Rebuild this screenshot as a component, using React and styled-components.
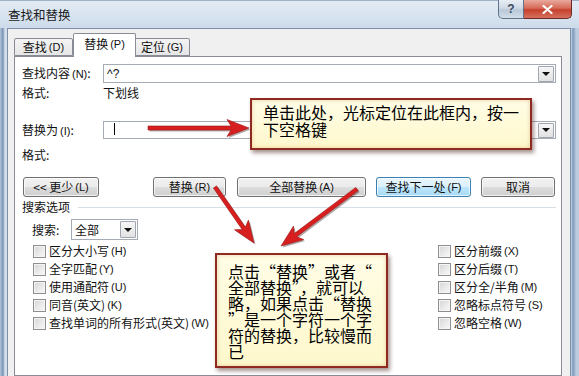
import styled, { createGlobalStyle } from 'styled-components';

const GlobalStyle = createGlobalStyle`
  html, body { margin: 0; padding: 0; }
  body {
    width: 579px;
    height: 376px;
    overflow: hidden;
    background: #fff;
    font-family: "Noto Sans CJK SC", "Noto Sans", sans-serif;
    font-size: 12px;
    color: #111;
  }
`;

const Window = styled.div`
  position: relative;
  width: 579px;
  height: 376px;
  overflow: hidden;
  display: flex;
  flex-direction: column;
  background: linear-gradient(
    90deg,
    #b3c5db 0px,
    #7893b5 3px,
    #dbe4ee 5px,
    #c9d7e7 7px,
    #c9d7e7 571px,
    #7a97ba 573px,
    #bccbdd 576px
  );
`;

const TitleBar = styled.div`
  height: 28px;
  flex-shrink: 0;
  display: flex;
  align-items: flex-start;
  padding-left: 8px;
  background: linear-gradient(180deg, #e3ebf4 0%, #d6e2ef 60%, #cddbea 100%);
  border-top: 1px solid #9fb2c8;
  box-sizing: border-box;
`;

const Title = styled.div`
  margin-top: 5px;
  font-size: 12.5px;
  line-height: 18px;
  color: #1a1a1a;
`;

const Controls = styled.div`
  margin-left: auto;
  margin-right: 7px;
  margin-top: -1px;
  display: flex;
`;

const CtrlButton = styled.div`
  width: ${(p) => p.$w}px;
  height: 19px;
  box-sizing: border-box;
  border: 1px solid ${(p) => (p.$close ? '#6b2a25' : '#5f738b')};
  border-top: none;
  border-radius: ${(p) => (p.$close ? '0 0 5px 0' : '0 0 0 5px')};
  ${(p) => (p.$close ? 'border-left: none;' : '')}
  background: ${(p) =>
    p.$close
      ? 'linear-gradient(180deg, #e9a99c 0%, #d66a58 45%, #c5402c 55%, #d7705f 100%)'
      : 'linear-gradient(180deg, #e8eef5 0%, #cfdae6 45%, #b9c8d8 55%, #d2dde8 100%)'};
  display: flex;
  align-items: center;
  justify-content: center;
  color: ${(p) => (p.$close ? '#fff' : '#3a4b5e')};
  font-family: "Liberation Sans", sans-serif;
  font-weight: bold;
  font-size: 12px;
`;

const Body = styled.div`
  flex: 1;
  display: flex;
  padding: 0 8px 0 7px;
  min-height: 0;
`;

const Client = styled.div`
  flex: 1;
  display: flex;
  flex-direction: column;
  background: #f0f0f0;
  border: 1px solid #7f91a8;
  border-bottom: none;
  padding: 4px 8px 0 6px;
`;

const Tabs = styled.div`
  display: flex;
  align-items: flex-end;
  height: 23px;
`;

const Tab = styled.div`
  width: ${(p) => p.$w}px;
  height: ${(p) => (p.$active ? 24 : 18)}px;
  box-sizing: border-box;
  border: 1px solid #898c95;
  border-bottom: ${(p) => (p.$active ? 'none' : '1px solid #898c95')};
  ${(p) => (p.$active ? '' : 'border-left: none;')}
  ${(p) => (p.$first ? 'border-left: 1px solid #898c95;' : '')}
  ${(p) => (p.$active ? 'border-right: 1px solid #898c95; margin-right: -1px;' : '')}
  border-radius: 2px 2px 0 0;
  margin-bottom: ${(p) => (p.$active ? -1 : 0)}px;
  position: relative;
  z-index: ${(p) => (p.$active ? 2 : 1)};
  background: ${(p) =>
    p.$active ? '#ffffff' : 'linear-gradient(180deg, #f4f4f4 0%, #e6e6e6 100%)'};
  display: flex;
  align-items: center;
  justify-content: center;
  padding-bottom: ${(p) => (p.$active ? 4 : 0)}px;
  font-size: 12px;
  line-height: 14px;
`;

const Key = styled.span`
  font-family: "Liberation Sans", sans-serif;
  font-size: 11px;
  margin-left: 2px;
`;

const Panel = styled.div`
  flex: 1;
  background: #fff;
  border: 1px solid #898c95;
  padding: 7px 5px 0 7px;
  display: flex;
  flex-direction: column;
`;

const FieldRow = styled.div`
  display: flex;
  align-items: center;
  height: ${(p) => p.$h}px;
  margin-top: ${(p) => p.$mt || 0}px;
  line-height: 14px;
`;

const Label = styled.div`
  width: 81px;
  flex-shrink: 0;
  white-space: nowrap;
`;

const Combo = styled.div`
  flex: 1;
  height: 100%;
  box-sizing: border-box;
  border: 1px solid #a5acb5;
  background: #fff;
  display: flex;
  align-items: center;
  padding-left: 3px;
  font-family: "Liberation Sans", sans-serif;
  font-size: 12px;
`;

const ComboText = styled.span`
  flex: 1;
`;

const Caret = styled.span`
  display: inline-block;
  width: 1px;
  height: 12px;
  background: #000;
  margin-left: 7px;
`;

const DropBtn = styled.div`
  width: ${(p) => p.$w || 16}px;
  height: ${(p) => p.$h || 16}px;
  box-sizing: border-box;
  margin-right: 1px;
  border: 1px solid #a0a7b0;
  border-radius: 1px;
  background: linear-gradient(180deg, #f6f6f6 0%, #e2e2e2 100%);
  display: flex;
  align-items: center;
  justify-content: center;
  &::after {
    content: '';
    border-left: 4px solid transparent;
    border-right: 4px solid transparent;
    border-top: 4px solid #111;
  }
`;

const ButtonRow = styled.div`
  display: flex;
  margin-top: 15px;
  padding-left: 1px;
`;

const Button = styled.div`
  width: ${(p) => p.$w}px;
  height: 20px;
  margin-left: ${(p) => p.$ml || 0}px;
  box-sizing: border-box;
  border: 1px solid ${(p) => (p.$primary ? '#3c7fb1' : '#707070')};
  border-radius: 3px;
  background: ${(p) =>
    p.$primary
      ? 'linear-gradient(180deg, #eaf6fd 0%, #d9f0fc 50%, #bee6fd 51%, #a7d9f5 100%)'
      : 'linear-gradient(180deg, #f2f2f2 0%, #ebebeb 50%, #dddddd 51%, #cfcfcf 100%)'};
  box-shadow: inset 0 0 0 1px rgba(255, 255, 255, 0.7);
  display: flex;
  align-items: center;
  justify-content: center;
  font-size: 12px;
  line-height: 14px;
  white-space: nowrap;
`;

const OptionsHeader = styled.div`
  display: flex;
  align-items: center;
  height: 14px;
  margin-top: 3px;
  line-height: 14px;
`;

const HeaderLine = styled.div`
  flex: 1;
  height: 1px;
  margin-left: 8px;
  background: #d5dfe5;
`;

const SearchRow = styled.div`
  display: flex;
  align-items: center;
  height: 21px;
  margin-top: 5px;
  padding-left: 10px;
  line-height: 14px;
`;

const SearchLabel = styled.div`
  width: 39px;
`;

const Select = styled.div`
  width: 67px;
  height: 21px;
  box-sizing: border-box;
  border: 1px solid #a5acb5;
  background: #fff;
  display: flex;
  align-items: center;
  padding-left: 3px;
`;

const CheckGrid = styled.div`
  display: grid;
  grid-template-columns: 405px auto;
  grid-template-rows: repeat(5, 18px);
  grid-auto-flow: column;
  margin-top: 2px;
  padding-left: 11px;
`;

const CheckItem = styled.div`
  display: flex;
  align-items: center;
  line-height: 14px;
  white-space: nowrap;
`;

const Box = styled.span`
  width: 13px;
  height: 13px;
  box-sizing: border-box;
  border: 1px solid #8f8f8f;
  background: linear-gradient(135deg, #d4d4d4 0%, #ececec 60%, #f8f8f8 100%);
  box-shadow: inset 0 0 0 1px #f4f4f4;
  margin-right: 3px;
  flex-shrink: 0;
`;

const Callout = styled.div`
  position: absolute;
  left: ${(p) => p.$x}px;
  top: ${(p) => p.$y}px;
  width: ${(p) => p.$w}px;
  height: ${(p) => p.$h}px;
  box-sizing: border-box;
  border: 2px solid #8e2a22;
  background: linear-gradient(180deg, #fffde6 0%, #fef8cc 100%);
  box-shadow: 2px 3px 4px rgba(60, 20, 10, 0.45), inset 0 0 4px rgba(190, 120, 60, 0.35);
  padding: ${(p) => p.$pad};
  font-size: 16px;
  line-height: ${(p) => p.$lh}px;
  color: #000;
  z-index: 5;
`;

const Line = styled.span`
  display: block;
  white-space: nowrap;
`;

const Overlay = styled.svg`
  position: absolute;
  left: 0;
  top: 0;
  z-index: 6;
  pointer-events: none;
`;

const arrowPoints = (x1, y1, x2, y2, w = 4, L = 22, H = 17) => {
  const dx = x2 - x1;
  const dy = y2 - y1;
  const len = Math.hypot(dx, dy);
  const ux = dx / len;
  const uy = dy / len;
  const nx = -uy;
  const ny = ux;
  const bx = x2 - ux * L;
  const by = y2 - uy * L;
  const bb = 4;
  const pts = [
    [x1 + (nx * w) / 2, y1 + (ny * w) / 2],
    [bx + ux * bb + (nx * w) / 2, by + uy * bb + (ny * w) / 2],
    [bx + (nx * H) / 2, by + (ny * H) / 2],
    [x2, y2],
    [bx - (nx * H) / 2, by - (ny * H) / 2],
    [bx + ux * bb - (nx * w) / 2, by + uy * bb - (ny * w) / 2],
    [x1 - (nx * w) / 2, y1 - (ny * w) / 2],
  ];
  return pts.map((p) => p.map((v) => v.toFixed(1)).join(',')).join(' ');
};

const Arrow = ({ from, to }) => (
  <g>
    <polygon
      points={arrowPoints(from[0] + 1.5, from[1] + 1.5, to[0] + 1.5, to[1] + 1.5)}
      fill="rgba(40,10,10,0.35)"
    />
    <polygon points={arrowPoints(from[0], from[1], to[0], to[1])} fill="#d81f1f" stroke="#9a1414" strokeWidth="0.6" />
  </g>
);

const leftChecks = [
  ['区分大小写', 'H'],
  ['全字匹配', 'Y'],
  ['使用通配符', 'U'],
  ['同音(英文)', 'K'],
  ['查找单词的所有形式(英文)', 'W'],
];

const rightChecks = [
  ['区分前缀', 'X'],
  ['区分后缀', 'T'],
  ['区分全/半角', 'M'],
  ['忽略标点符号', 'S'],
  ['忽略空格', 'W'],
];

export default function App() {
  return (
    <>
      <GlobalStyle />
      <Window lang="zh-CN">
        <TitleBar>
          <Title>查找和替换</Title>
          <Controls>
            <CtrlButton $w={26}>?</CtrlButton>
            <CtrlButton $w={48} $close>
              <svg width="11" height="9" viewBox="0 0 11 9">
                <path d="M1.5 1 L9.5 8 M9.5 1 L1.5 8" stroke="#fff" strokeWidth="2.2" strokeLinecap="round" />
              </svg>
            </CtrlButton>
          </Controls>
        </TitleBar>
        <Body>
          <Client>
            <Tabs>
              <Tab $w={59} $first>
                查找<Key>(D)</Key>
              </Tab>
              <Tab $w={63} $active>
                替换<Key>(P)</Key>
              </Tab>
              <Tab $w={55}>
                定位<Key>(G)</Key>
              </Tab>
            </Tabs>
            <Panel>
              <FieldRow $h={19}>
                <Label>
                  查找内容<Key>(N)</Key>:
                </Label>
                <Combo>
                  <ComboText>^?</ComboText>
                  <DropBtn />
                </Combo>
              </FieldRow>
              <FieldRow $h={14} $mt={3}>
                <Label>格式:</Label>
                <span>下划线</span>
              </FieldRow>
              <FieldRow $h={18} $mt={21}>
                <Label>
                  替换为<Key>(I)</Key>:
                </Label>
                <Combo>
                  <ComboText>
                    <Caret />
                  </ComboText>
                  <DropBtn $h={15} />
                </Combo>
              </FieldRow>
              <FieldRow $h={14} $mt={9}>
                <Label>格式:</Label>
              </FieldRow>
              <ButtonRow>
                <Button $w={76}>
                  &lt;&lt; 更少<Key>(L)</Key>
                </Button>
                <Button $w={73} $ml={54}>
                  替换<Key>(R)</Key>
                </Button>
                <Button $w={129} $ml={11}>
                  全部替换<Key>(A)</Key>
                </Button>
                <Button $w={95} $ml={10} $primary>
                  查找下一处<Key>(F)</Key>
                </Button>
                <Button $w={74} $ml={10}>
                  取消
                </Button>
              </ButtonRow>
              <OptionsHeader>
                搜索选项
                <HeaderLine />
              </OptionsHeader>
              <SearchRow>
                <SearchLabel>搜索:</SearchLabel>
                <Select>
                  <ComboText>全部</ComboText>
                  <DropBtn $w={16} $h={17} />
                </Select>
              </SearchRow>
              <CheckGrid>
                {[...leftChecks, ...rightChecks].map(([text, key], i) => (
                  <CheckItem key={i}>
                    <Box />
                    {text}
                    <Key>({key})</Key>
                  </CheckItem>
                ))}
              </CheckGrid>
            </Panel>
          </Client>
        </Body>

        <Callout $x={250} $y={98} $w={282} $h={52} $pad="4px 0 0 11px" $lh={17}>
          <Line>单击此处，光标定位在此框内，按一</Line>
          <Line>下空格键</Line>
        </Callout>
        <Callout $x={215} $y={253} $w={173} $h={115} $pad="8px 0 0 11px" $lh={16}>
          <Line>点击“替换”或者“</Line>
          <Line>全部替换”，就可以</Line>
          <Line>略，如果点击“替换</Line>
          <Line>”是一个字符一个字</Line>
          <Line>符的替换，比较慢而</Line>
          <Line>已</Line>
        </Callout>

        <Overlay width="579" height="376" viewBox="0 0 579 376">
          <Arrow from={[148, 128]} to={[249, 128]} />
          <Arrow from={[215, 187]} to={[254, 243]} />
          <Arrow from={[357, 189]} to={[281, 246]} />
        </Overlay>
      </Window>
    </>
  );
}
